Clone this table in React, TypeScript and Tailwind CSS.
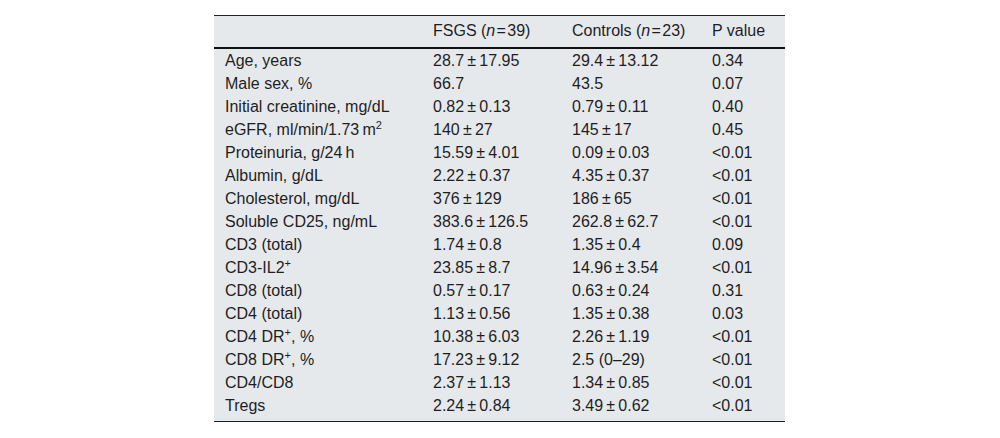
const sp = "\u2009";
const pm = (a: string, b: string) => `${a}${sp}±${sp}${b}`;

const Sup = ({ children }: { children: React.ReactNode }) => (
  <sup className="text-[11px] -top-[6px]">{children}</sup>
);

const rows: [React.ReactNode, string, string, string][] = [
  ["Age, years", pm("28.7", "17.95"), pm("29.4", "13.12"), "0.34"],
  ["Male sex, %", "66.7", "43.5", "0.07"],
  ["Initial creatinine, mg/dL", pm("0.82", "0.13"), pm("0.79", "0.11"), "0.40"],
  [
    <>
      eGFR, ml/min/1.73{sp}m<Sup>2</Sup>
    </>,
    pm("140", "27"),
    pm("145", "17"),
    "0.45",
  ],
  ["Proteinuria, g/24\u2009h", pm("15.59", "4.01"), pm("0.09", "0.03"), "<0.01"],
  ["Albumin, g/dL", pm("2.22", "0.37"), pm("4.35", "0.37"), "<0.01"],
  ["Cholesterol, mg/dL", pm("376", "129"), pm("186", "65"), "<0.01"],
  ["Soluble CD25, ng/mL", pm("383.6", "126.5"), pm("262.8", "62.7"), "<0.01"],
  ["CD3 (total)", pm("1.74", "0.8"), pm("1.35", "0.4"), "0.09"],
  [
    <>
      CD3-IL2<Sup>+</Sup>
    </>,
    pm("23.85", "8.7"),
    pm("14.96", "3.54"),
    "<0.01",
  ],
  ["CD8 (total)", pm("0.57", "0.17"), pm("0.63", "0.24"), "0.31"],
  ["CD4 (total)", pm("1.13", "0.56"), pm("1.35", "0.38"), "0.03"],
  [
    <>
      CD4 DR<Sup>+</Sup>, %
    </>,
    pm("10.38", "6.03"),
    pm("2.26", "1.19"),
    "<0.01",
  ],
  [
    <>
      CD8 DR<Sup>+</Sup>, %
    </>,
    pm("17.23", "9.12"),
    "2.5 (0–29)",
    "<0.01",
  ],
  ["CD4/CD8", pm("2.37", "1.13"), pm("1.34", "0.85"), "<0.01"],
  ["Tregs", pm("2.24", "0.84"), pm("3.49", "0.62"), "<0.01"],
];

export default function App() {
  return (
    <div className="min-h-screen bg-white pt-[15px] font-['Liberation_Sans',Arial,sans-serif] text-[16px] text-[#1e1e1e]">
      <div className="w-[571px] ml-[214px]">
        <table className="w-full table-fixed border-collapse bg-[#e6e9ec]">
          <colgroup>
            <col className="w-[209px]" />
            <col className="w-[139px]" />
            <col className="w-[140px]" />
            <col className="w-[83px]" />
          </colgroup>
          <thead>
            <tr className="h-[32px] border-t border-[#222] border-b-2 border-b-[#111]">
              <th className="pl-[11px] text-left font-normal"></th>
              <th className="pl-[10px] text-left font-normal">
                FSGS (<i>n</i>{"\u200a"}={"\u200a"}39)
              </th>
              <th className="pl-[10px] text-left font-normal">
                Controls (<i>n</i>{"\u200a"}={"\u200a"}23)
              </th>
              <th className="pl-[10px] text-left font-normal">P value</th>
            </tr>
          </thead>
          <tbody className="border-b border-[#222]">
            {rows.map((r, i) => (
              <tr key={i} className={i === rows.length - 1 ? "h-[28px] align-top" : "h-[23px]"}>
                <td className="pl-[11px] leading-[23px]">{r[0]}</td>
                <td className="pl-[10px] leading-[23px]">{r[1]}</td>
                <td className="pl-[10px] leading-[23px]">{r[2]}</td>
                <td className="pl-[10px] leading-[23px]">{r[3]}</td>
              </tr>
            ))}
          </tbody>
        </table>
      </div>
    </div>
  );
}
